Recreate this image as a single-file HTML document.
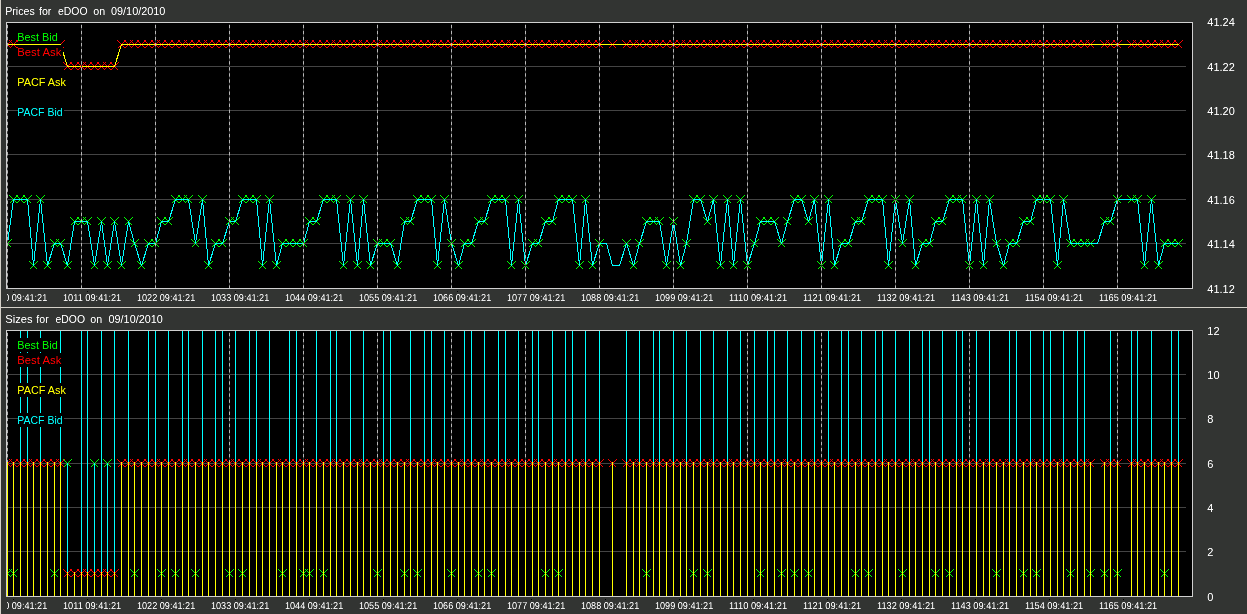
<!DOCTYPE html>
<html><head><meta charset="utf-8"><title>eDOO 09/10/2010</title>
<style>html,body{margin:0;padding:0;background:#323432;overflow:hidden}svg{display:block}text{font-family:"Liberation Sans",Arial,sans-serif;font-size:11px;fill:#fff}.s{font-size:10px;text-rendering:geometricPrecision}.c{shape-rendering:crispEdges;fill:none;stroke-width:1;stroke-linecap:square}</style></head><body>
<svg width="1247" height="614" viewBox="0 0 1247 614">
<defs><filter id="t" x="0" y="0" width="100%" height="100%" filterUnits="userSpaceOnUse" color-interpolation-filters="sRGB"><feComponentTransfer><feFuncA type="table" tableValues="0 0.15 0.5 0.85 1"/></feComponentTransfer></filter></defs>
<rect width="1247" height="614" fill="#323432"/>
<rect x="0" y="0" width="1" height="614" fill="#d4d0c8"/>
<rect x="0" y="307" width="1247" height="1" fill="#d4d0c8"/>
<g>
<rect x="6.5" y="22.5" width="1186" height="266" fill="#000" stroke="#d0d0d0" stroke-width="1" shape-rendering="crispEdges"/>
<path d="M7 66.5H1186M7 110.5H1186M7 154.5H1186M7 199.5H1186M7 243.5H1186" stroke="#444444" stroke-width="1" fill="none" shape-rendering="crispEdges"/>
<clipPath id="ptop"><rect x="7" y="23" width="1185" height="265"/></clipPath>
<g clip-path="url(#ptop)">
<path class="c" d="M3.5 239.5l7 7M4.5 246.5l7 -7M9.5 195.5l7 7M10.5 202.5l7 -7M16.5 195.5l7 7M17.5 202.5l7 -7M23.5 195.5l7 7M24.5 202.5l7 -7M29.5 261.5l7 7M30.5 268.5l7 -7M36.5 195.5l7 7M37.5 202.5l7 -7M43.5 261.5l7 7M44.5 268.5l7 -7M50.5 239.5l7 7M51.5 246.5l7 -7M56.5 239.5l7 7M57.5 246.5l7 -7M63.5 261.5l7 7M64.5 268.5l7 -7M70.5 217.5l7 7M71.5 224.5l7 -7M77.5 217.5l7 7M78.5 224.5l7 -7M83.5 217.5l7 7M84.5 224.5l7 -7M90.5 261.5l7 7M91.5 268.5l7 -7M97.5 217.5l7 7M98.5 224.5l7 -7M103.5 261.5l7 7M104.5 268.5l7 -7M110.5 217.5l7 7M111.5 224.5l7 -7M117.5 261.5l7 7M118.5 268.5l7 -7M124.5 217.5l7 7M125.5 224.5l7 -7M130.5 239.5l7 7M131.5 246.5l7 -7M137.5 261.5l7 7M138.5 268.5l7 -7M144.5 239.5l7 7M145.5 246.5l7 -7M151.5 239.5l7 7M152.5 246.5l7 -7M157.5 217.5l7 7M158.5 224.5l7 -7M164.5 217.5l7 7M165.5 224.5l7 -7M171.5 195.5l7 7M172.5 202.5l7 -7M178.5 195.5l7 7M179.5 202.5l7 -7M184.5 195.5l7 7M185.5 202.5l7 -7M191.5 239.5l7 7M192.5 246.5l7 -7M198.5 195.5l7 7M199.5 202.5l7 -7M204.5 261.5l7 7M205.5 268.5l7 -7M211.5 239.5l7 7M212.5 246.5l7 -7M218.5 239.5l7 7M219.5 246.5l7 -7M225.5 217.5l7 7M226.5 224.5l7 -7M231.5 217.5l7 7M232.5 224.5l7 -7M238.5 195.5l7 7M239.5 202.5l7 -7M245.5 195.5l7 7M246.5 202.5l7 -7M252.5 195.5l7 7M253.5 202.5l7 -7M258.5 261.5l7 7M259.5 268.5l7 -7M265.5 195.5l7 7M266.5 202.5l7 -7M272.5 261.5l7 7M273.5 268.5l7 -7M278.5 239.5l7 7M279.5 246.5l7 -7M285.5 239.5l7 7M286.5 246.5l7 -7M292.5 239.5l7 7M293.5 246.5l7 -7M299.5 239.5l7 7M300.5 246.5l7 -7M305.5 217.5l7 7M306.5 224.5l7 -7M312.5 217.5l7 7M313.5 224.5l7 -7M319.5 195.5l7 7M320.5 202.5l7 -7M326.5 195.5l7 7M327.5 202.5l7 -7M332.5 195.5l7 7M333.5 202.5l7 -7M339.5 261.5l7 7M340.5 268.5l7 -7M346.5 195.5l7 7M347.5 202.5l7 -7M353.5 261.5l7 7M354.5 268.5l7 -7M359.5 195.5l7 7M360.5 202.5l7 -7M366.5 261.5l7 7M367.5 268.5l7 -7M373.5 239.5l7 7M374.5 246.5l7 -7M379.5 239.5l7 7M380.5 246.5l7 -7M386.5 239.5l7 7M387.5 246.5l7 -7M393.5 261.5l7 7M394.5 268.5l7 -7M400.5 217.5l7 7M401.5 224.5l7 -7M406.5 217.5l7 7M407.5 224.5l7 -7M413.5 195.5l7 7M414.5 202.5l7 -7M420.5 195.5l7 7M421.5 202.5l7 -7M427.5 195.5l7 7M428.5 202.5l7 -7M433.5 261.5l7 7M434.5 268.5l7 -7M440.5 195.5l7 7M441.5 202.5l7 -7M447.5 239.5l7 7M448.5 246.5l7 -7M454.5 261.5l7 7M455.5 268.5l7 -7M460.5 239.5l7 7M461.5 246.5l7 -7M467.5 239.5l7 7M468.5 246.5l7 -7M474.5 217.5l7 7M475.5 224.5l7 -7M480.5 217.5l7 7M481.5 224.5l7 -7M487.5 195.5l7 7M488.5 202.5l7 -7M494.5 195.5l7 7M495.5 202.5l7 -7M501.5 195.5l7 7M502.5 202.5l7 -7M507.5 261.5l7 7M508.5 268.5l7 -7M514.5 195.5l7 7M515.5 202.5l7 -7M521.5 261.5l7 7M522.5 268.5l7 -7M528.5 239.5l7 7M529.5 246.5l7 -7M534.5 239.5l7 7M535.5 246.5l7 -7M541.5 217.5l7 7M542.5 224.5l7 -7M548.5 217.5l7 7M549.5 224.5l7 -7M554.5 195.5l7 7M555.5 202.5l7 -7M561.5 195.5l7 7M562.5 202.5l7 -7M568.5 195.5l7 7M569.5 202.5l7 -7M575.5 261.5l7 7M576.5 268.5l7 -7M581.5 195.5l7 7M582.5 202.5l7 -7M588.5 261.5l7 7M589.5 268.5l7 -7M595.5 239.5l7 7M596.5 246.5l7 -7M622.5 239.5l7 7M623.5 246.5l7 -7M629.5 261.5l7 7M630.5 268.5l7 -7M635.5 239.5l7 7M636.5 246.5l7 -7M642.5 217.5l7 7M643.5 224.5l7 -7M649.5 217.5l7 7M650.5 224.5l7 -7M655.5 217.5l7 7M656.5 224.5l7 -7M662.5 261.5l7 7M663.5 268.5l7 -7M669.5 217.5l7 7M670.5 224.5l7 -7M676.5 261.5l7 7M677.5 268.5l7 -7M682.5 239.5l7 7M683.5 246.5l7 -7M689.5 195.5l7 7M690.5 202.5l7 -7M696.5 195.5l7 7M697.5 202.5l7 -7M703.5 217.5l7 7M704.5 224.5l7 -7M709.5 195.5l7 7M710.5 202.5l7 -7M716.5 261.5l7 7M717.5 268.5l7 -7M723.5 195.5l7 7M724.5 202.5l7 -7M729.5 261.5l7 7M730.5 268.5l7 -7M736.5 195.5l7 7M737.5 202.5l7 -7M743.5 261.5l7 7M744.5 268.5l7 -7M750.5 239.5l7 7M751.5 246.5l7 -7M756.5 217.5l7 7M757.5 224.5l7 -7M763.5 217.5l7 7M764.5 224.5l7 -7M770.5 217.5l7 7M771.5 224.5l7 -7M777.5 239.5l7 7M778.5 246.5l7 -7M783.5 217.5l7 7M784.5 224.5l7 -7M790.5 195.5l7 7M791.5 202.5l7 -7M797.5 195.5l7 7M798.5 202.5l7 -7M804.5 217.5l7 7M805.5 224.5l7 -7M810.5 195.5l7 7M811.5 202.5l7 -7M817.5 261.5l7 7M818.5 268.5l7 -7M824.5 195.5l7 7M825.5 202.5l7 -7M830.5 261.5l7 7M831.5 268.5l7 -7M837.5 239.5l7 7M838.5 246.5l7 -7M844.5 239.5l7 7M845.5 246.5l7 -7M851.5 217.5l7 7M852.5 224.5l7 -7M857.5 217.5l7 7M858.5 224.5l7 -7M864.5 195.5l7 7M865.5 202.5l7 -7M871.5 195.5l7 7M872.5 202.5l7 -7M878.5 195.5l7 7M879.5 202.5l7 -7M884.5 261.5l7 7M885.5 268.5l7 -7M891.5 195.5l7 7M892.5 202.5l7 -7M898.5 239.5l7 7M899.5 246.5l7 -7M905.5 195.5l7 7M906.5 202.5l7 -7M911.5 261.5l7 7M912.5 268.5l7 -7M918.5 239.5l7 7M919.5 246.5l7 -7M925.5 239.5l7 7M926.5 246.5l7 -7M931.5 217.5l7 7M932.5 224.5l7 -7M938.5 217.5l7 7M939.5 224.5l7 -7M945.5 195.5l7 7M946.5 202.5l7 -7M952.5 195.5l7 7M953.5 202.5l7 -7M958.5 195.5l7 7M959.5 202.5l7 -7M965.5 261.5l7 7M966.5 268.5l7 -7M972.5 195.5l7 7M973.5 202.5l7 -7M979.5 261.5l7 7M980.5 268.5l7 -7M985.5 195.5l7 7M986.5 202.5l7 -7M992.5 239.5l7 7M993.5 246.5l7 -7M999.5 261.5l7 7M1000.5 268.5l7 -7M1005.5 239.5l7 7M1006.5 246.5l7 -7M1012.5 239.5l7 7M1013.5 246.5l7 -7M1019.5 217.5l7 7M1020.5 224.5l7 -7M1026.5 217.5l7 7M1027.5 224.5l7 -7M1032.5 195.5l7 7M1033.5 202.5l7 -7M1039.5 195.5l7 7M1040.5 202.5l7 -7M1046.5 195.5l7 7M1047.5 202.5l7 -7M1053.5 261.5l7 7M1054.5 268.5l7 -7M1059.5 195.5l7 7M1060.5 202.5l7 -7M1066.5 239.5l7 7M1067.5 246.5l7 -7M1073.5 239.5l7 7M1074.5 246.5l7 -7M1080.5 239.5l7 7M1081.5 246.5l7 -7M1086.5 239.5l7 7M1087.5 246.5l7 -7M1100.5 217.5l7 7M1101.5 224.5l7 -7M1106.5 217.5l7 7M1107.5 224.5l7 -7M1113.5 195.5l7 7M1114.5 202.5l7 -7M1127.5 195.5l7 7M1128.5 202.5l7 -7M1133.5 195.5l7 7M1134.5 202.5l7 -7M1140.5 261.5l7 7M1141.5 268.5l7 -7M1147.5 195.5l7 7M1148.5 202.5l7 -7M1154.5 261.5l7 7M1155.5 268.5l7 -7M1160.5 239.5l7 7M1161.5 246.5l7 -7M1167.5 239.5l7 7M1168.5 246.5l7 -7M1174.5 239.5l7 7M1175.5 246.5l7 -7" stroke="#0f0"/>
<path class="c" d="M3.5 40.5l7 7M4.5 47.5l7 -7M9.5 40.5l7 7M10.5 47.5l7 -7M16.5 40.5l7 7M17.5 47.5l7 -7M23.5 40.5l7 7M24.5 47.5l7 -7M29.5 40.5l7 7M30.5 47.5l7 -7M36.5 40.5l7 7M37.5 47.5l7 -7M43.5 40.5l7 7M44.5 47.5l7 -7M50.5 40.5l7 7M51.5 47.5l7 -7M56.5 40.5l7 7M57.5 47.5l7 -7M63.5 62.5l7 7M64.5 69.5l7 -7M70.5 62.5l7 7M71.5 69.5l7 -7M77.5 62.5l7 7M78.5 69.5l7 -7M83.5 62.5l7 7M84.5 69.5l7 -7M90.5 62.5l7 7M91.5 69.5l7 -7M97.5 62.5l7 7M98.5 69.5l7 -7M103.5 62.5l7 7M104.5 69.5l7 -7M110.5 62.5l7 7M111.5 69.5l7 -7M117.5 40.5l7 7M118.5 47.5l7 -7M124.5 40.5l7 7M125.5 47.5l7 -7M130.5 40.5l7 7M131.5 47.5l7 -7M137.5 40.5l7 7M138.5 47.5l7 -7M144.5 40.5l7 7M145.5 47.5l7 -7M151.5 40.5l7 7M152.5 47.5l7 -7M157.5 40.5l7 7M158.5 47.5l7 -7M164.5 40.5l7 7M165.5 47.5l7 -7M171.5 40.5l7 7M172.5 47.5l7 -7M178.5 40.5l7 7M179.5 47.5l7 -7M184.5 40.5l7 7M185.5 47.5l7 -7M191.5 40.5l7 7M192.5 47.5l7 -7M198.5 40.5l7 7M199.5 47.5l7 -7M204.5 40.5l7 7M205.5 47.5l7 -7M211.5 40.5l7 7M212.5 47.5l7 -7M218.5 40.5l7 7M219.5 47.5l7 -7M225.5 40.5l7 7M226.5 47.5l7 -7M231.5 40.5l7 7M232.5 47.5l7 -7M238.5 40.5l7 7M239.5 47.5l7 -7M245.5 40.5l7 7M246.5 47.5l7 -7M252.5 40.5l7 7M253.5 47.5l7 -7M258.5 40.5l7 7M259.5 47.5l7 -7M265.5 40.5l7 7M266.5 47.5l7 -7M272.5 40.5l7 7M273.5 47.5l7 -7M278.5 40.5l7 7M279.5 47.5l7 -7M285.5 40.5l7 7M286.5 47.5l7 -7M292.5 40.5l7 7M293.5 47.5l7 -7M299.5 40.5l7 7M300.5 47.5l7 -7M305.5 40.5l7 7M306.5 47.5l7 -7M312.5 40.5l7 7M313.5 47.5l7 -7M319.5 40.5l7 7M320.5 47.5l7 -7M326.5 40.5l7 7M327.5 47.5l7 -7M332.5 40.5l7 7M333.5 47.5l7 -7M339.5 40.5l7 7M340.5 47.5l7 -7M346.5 40.5l7 7M347.5 47.5l7 -7M353.5 40.5l7 7M354.5 47.5l7 -7M359.5 40.5l7 7M360.5 47.5l7 -7M366.5 40.5l7 7M367.5 47.5l7 -7M373.5 40.5l7 7M374.5 47.5l7 -7M379.5 40.5l7 7M380.5 47.5l7 -7M386.5 40.5l7 7M387.5 47.5l7 -7M393.5 40.5l7 7M394.5 47.5l7 -7M400.5 40.5l7 7M401.5 47.5l7 -7M406.5 40.5l7 7M407.5 47.5l7 -7M413.5 40.5l7 7M414.5 47.5l7 -7M420.5 40.5l7 7M421.5 47.5l7 -7M427.5 40.5l7 7M428.5 47.5l7 -7M433.5 40.5l7 7M434.5 47.5l7 -7M440.5 40.5l7 7M441.5 47.5l7 -7M447.5 40.5l7 7M448.5 47.5l7 -7M454.5 40.5l7 7M455.5 47.5l7 -7M460.5 40.5l7 7M461.5 47.5l7 -7M467.5 40.5l7 7M468.5 47.5l7 -7M474.5 40.5l7 7M475.5 47.5l7 -7M480.5 40.5l7 7M481.5 47.5l7 -7M487.5 40.5l7 7M488.5 47.5l7 -7M494.5 40.5l7 7M495.5 47.5l7 -7M501.5 40.5l7 7M502.5 47.5l7 -7M507.5 40.5l7 7M508.5 47.5l7 -7M514.5 40.5l7 7M515.5 47.5l7 -7M521.5 40.5l7 7M522.5 47.5l7 -7M528.5 40.5l7 7M529.5 47.5l7 -7M534.5 40.5l7 7M535.5 47.5l7 -7M541.5 40.5l7 7M542.5 47.5l7 -7M548.5 40.5l7 7M549.5 47.5l7 -7M554.5 40.5l7 7M555.5 47.5l7 -7M561.5 40.5l7 7M562.5 47.5l7 -7M568.5 40.5l7 7M569.5 47.5l7 -7M575.5 40.5l7 7M576.5 47.5l7 -7M581.5 40.5l7 7M582.5 47.5l7 -7M588.5 40.5l7 7M589.5 47.5l7 -7M595.5 40.5l7 7M596.5 47.5l7 -7M608.5 40.5l7 7M609.5 47.5l7 -7M622.5 40.5l7 7M623.5 47.5l7 -7M629.5 40.5l7 7M630.5 47.5l7 -7M635.5 40.5l7 7M636.5 47.5l7 -7M642.5 40.5l7 7M643.5 47.5l7 -7M649.5 40.5l7 7M650.5 47.5l7 -7M655.5 40.5l7 7M656.5 47.5l7 -7M662.5 40.5l7 7M663.5 47.5l7 -7M669.5 40.5l7 7M670.5 47.5l7 -7M676.5 40.5l7 7M677.5 47.5l7 -7M682.5 40.5l7 7M683.5 47.5l7 -7M689.5 40.5l7 7M690.5 47.5l7 -7M696.5 40.5l7 7M697.5 47.5l7 -7M703.5 40.5l7 7M704.5 47.5l7 -7M709.5 40.5l7 7M710.5 47.5l7 -7M716.5 40.5l7 7M717.5 47.5l7 -7M723.5 40.5l7 7M724.5 47.5l7 -7M729.5 40.5l7 7M730.5 47.5l7 -7M736.5 40.5l7 7M737.5 47.5l7 -7M743.5 40.5l7 7M744.5 47.5l7 -7M750.5 40.5l7 7M751.5 47.5l7 -7M756.5 40.5l7 7M757.5 47.5l7 -7M763.5 40.5l7 7M764.5 47.5l7 -7M770.5 40.5l7 7M771.5 47.5l7 -7M777.5 40.5l7 7M778.5 47.5l7 -7M783.5 40.5l7 7M784.5 47.5l7 -7M790.5 40.5l7 7M791.5 47.5l7 -7M797.5 40.5l7 7M798.5 47.5l7 -7M804.5 40.5l7 7M805.5 47.5l7 -7M810.5 40.5l7 7M811.5 47.5l7 -7M817.5 40.5l7 7M818.5 47.5l7 -7M824.5 40.5l7 7M825.5 47.5l7 -7M830.5 40.5l7 7M831.5 47.5l7 -7M837.5 40.5l7 7M838.5 47.5l7 -7M844.5 40.5l7 7M845.5 47.5l7 -7M851.5 40.5l7 7M852.5 47.5l7 -7M857.5 40.5l7 7M858.5 47.5l7 -7M864.5 40.5l7 7M865.5 47.5l7 -7M871.5 40.5l7 7M872.5 47.5l7 -7M878.5 40.5l7 7M879.5 47.5l7 -7M884.5 40.5l7 7M885.5 47.5l7 -7M891.5 40.5l7 7M892.5 47.5l7 -7M898.5 40.5l7 7M899.5 47.5l7 -7M905.5 40.5l7 7M906.5 47.5l7 -7M911.5 40.5l7 7M912.5 47.5l7 -7M918.5 40.5l7 7M919.5 47.5l7 -7M925.5 40.5l7 7M926.5 47.5l7 -7M931.5 40.5l7 7M932.5 47.5l7 -7M938.5 40.5l7 7M939.5 47.5l7 -7M945.5 40.5l7 7M946.5 47.5l7 -7M952.5 40.5l7 7M953.5 47.5l7 -7M958.5 40.5l7 7M959.5 47.5l7 -7M965.5 40.5l7 7M966.5 47.5l7 -7M972.5 40.5l7 7M973.5 47.5l7 -7M979.5 40.5l7 7M980.5 47.5l7 -7M985.5 40.5l7 7M986.5 47.5l7 -7M992.5 40.5l7 7M993.5 47.5l7 -7M999.5 40.5l7 7M1000.5 47.5l7 -7M1005.5 40.5l7 7M1006.5 47.5l7 -7M1012.5 40.5l7 7M1013.5 47.5l7 -7M1019.5 40.5l7 7M1020.5 47.5l7 -7M1026.5 40.5l7 7M1027.5 47.5l7 -7M1032.5 40.5l7 7M1033.5 47.5l7 -7M1039.5 40.5l7 7M1040.5 47.5l7 -7M1046.5 40.5l7 7M1047.5 47.5l7 -7M1053.5 40.5l7 7M1054.5 47.5l7 -7M1059.5 40.5l7 7M1060.5 47.5l7 -7M1066.5 40.5l7 7M1067.5 47.5l7 -7M1073.5 40.5l7 7M1074.5 47.5l7 -7M1080.5 40.5l7 7M1081.5 47.5l7 -7M1086.5 40.5l7 7M1087.5 47.5l7 -7M1100.5 40.5l7 7M1101.5 47.5l7 -7M1106.5 40.5l7 7M1107.5 47.5l7 -7M1113.5 40.5l7 7M1114.5 47.5l7 -7M1127.5 40.5l7 7M1128.5 47.5l7 -7M1133.5 40.5l7 7M1134.5 47.5l7 -7M1140.5 40.5l7 7M1141.5 47.5l7 -7M1147.5 40.5l7 7M1148.5 47.5l7 -7M1154.5 40.5l7 7M1155.5 47.5l7 -7M1160.5 40.5l7 7M1161.5 47.5l7 -7M1167.5 40.5l7 7M1168.5 47.5l7 -7M1174.5 40.5l7 7M1175.5 47.5l7 -7" stroke="#f00"/>
<polyline class="c" points="7.5,44.5 13.5,44.5 20.5,44.5 27.5,44.5 33.5,44.5 40.5,44.5 47.5,44.5 54.5,44.5 60.5,44.5 67.5,66.5 74.5,66.5 81.5,66.5 87.5,66.5 94.5,66.5 101.5,66.5 107.5,66.5 114.5,66.5 121.5,44.5 128.5,44.5 134.5,44.5 141.5,44.5 148.5,44.5 155.5,44.5 161.5,44.5 168.5,44.5 175.5,44.5 182.5,44.5 188.5,44.5 195.5,44.5 202.5,44.5 208.5,44.5 215.5,44.5 222.5,44.5 229.5,44.5 235.5,44.5 242.5,44.5 249.5,44.5 256.5,44.5 262.5,44.5 269.5,44.5 276.5,44.5 282.5,44.5 289.5,44.5 296.5,44.5 303.5,44.5 309.5,44.5 316.5,44.5 323.5,44.5 330.5,44.5 336.5,44.5 343.5,44.5 350.5,44.5 357.5,44.5 363.5,44.5 370.5,44.5 377.5,44.5 383.5,44.5 390.5,44.5 397.5,44.5 404.5,44.5 410.5,44.5 417.5,44.5 424.5,44.5 431.5,44.5 437.5,44.5 444.5,44.5 451.5,44.5 458.5,44.5 464.5,44.5 471.5,44.5 478.5,44.5 484.5,44.5 491.5,44.5 498.5,44.5 505.5,44.5 511.5,44.5 518.5,44.5 525.5,44.5 532.5,44.5 538.5,44.5 545.5,44.5 552.5,44.5 558.5,44.5 565.5,44.5 572.5,44.5 579.5,44.5 585.5,44.5 592.5,44.5 599.5,44.5 606.5,44.5 612.5,44.5 619.5,44.5 626.5,44.5 633.5,44.5 639.5,44.5 646.5,44.5 653.5,44.5 659.5,44.5 666.5,44.5 673.5,44.5 680.5,44.5 686.5,44.5 693.5,44.5 700.5,44.5 707.5,44.5 713.5,44.5 720.5,44.5 727.5,44.5 733.5,44.5 740.5,44.5 747.5,44.5 754.5,44.5 760.5,44.5 767.5,44.5 774.5,44.5 781.5,44.5 787.5,44.5 794.5,44.5 801.5,44.5 808.5,44.5 814.5,44.5 821.5,44.5 828.5,44.5 834.5,44.5 841.5,44.5 848.5,44.5 855.5,44.5 861.5,44.5 868.5,44.5 875.5,44.5 882.5,44.5 888.5,44.5 895.5,44.5 902.5,44.5 909.5,44.5 915.5,44.5 922.5,44.5 929.5,44.5 935.5,44.5 942.5,44.5 949.5,44.5 956.5,44.5 962.5,44.5 969.5,44.5 976.5,44.5 983.5,44.5 989.5,44.5 996.5,44.5 1003.5,44.5 1009.5,44.5 1016.5,44.5 1023.5,44.5 1030.5,44.5 1036.5,44.5 1043.5,44.5 1050.5,44.5 1057.5,44.5 1063.5,44.5 1070.5,44.5 1077.5,44.5 1084.5,44.5 1090.5,44.5 1097.5,44.5 1104.5,44.5 1110.5,44.5 1117.5,44.5 1124.5,44.5 1131.5,44.5 1137.5,44.5 1144.5,44.5 1151.5,44.5 1158.5,44.5 1164.5,44.5 1171.5,44.5 1178.5,44.5" stroke="#ff0"/>
<polyline class="c" points="7.5,243.5 13.5,199.5 20.5,199.5 27.5,199.5 33.5,265.5 40.5,199.5 47.5,265.5 54.5,243.5 60.5,243.5 67.5,265.5 74.5,221.5 81.5,221.5 87.5,221.5 94.5,265.5 101.5,221.5 107.5,265.5 114.5,221.5 121.5,265.5 128.5,221.5 134.5,243.5 141.5,265.5 148.5,243.5 155.5,243.5 161.5,221.5 168.5,221.5 175.5,199.5 182.5,199.5 188.5,199.5 195.5,243.5 202.5,199.5 208.5,265.5 215.5,243.5 222.5,243.5 229.5,221.5 235.5,221.5 242.5,199.5 249.5,199.5 256.5,199.5 262.5,265.5 269.5,199.5 276.5,265.5 282.5,243.5 289.5,243.5 296.5,243.5 303.5,243.5 309.5,221.5 316.5,221.5 323.5,199.5 330.5,199.5 336.5,199.5 343.5,265.5 350.5,199.5 357.5,265.5 363.5,199.5 370.5,265.5 377.5,243.5 383.5,243.5 390.5,243.5 397.5,265.5 404.5,221.5 410.5,221.5 417.5,199.5 424.5,199.5 431.5,199.5 437.5,265.5 444.5,199.5 451.5,243.5 458.5,265.5 464.5,243.5 471.5,243.5 478.5,221.5 484.5,221.5 491.5,199.5 498.5,199.5 505.5,199.5 511.5,265.5 518.5,199.5 525.5,265.5 532.5,243.5 538.5,243.5 545.5,221.5 552.5,221.5 558.5,199.5 565.5,199.5 572.5,199.5 579.5,265.5 585.5,199.5 592.5,265.5 599.5,243.5 606.5,243.5 612.5,265.5 619.5,265.5 626.5,243.5 633.5,265.5 639.5,243.5 646.5,221.5 653.5,221.5 659.5,221.5 666.5,265.5 673.5,221.5 680.5,265.5 686.5,243.5 693.5,199.5 700.5,199.5 707.5,221.5 713.5,199.5 720.5,265.5 727.5,199.5 733.5,265.5 740.5,199.5 747.5,265.5 754.5,243.5 760.5,221.5 767.5,221.5 774.5,221.5 781.5,243.5 787.5,221.5 794.5,199.5 801.5,199.5 808.5,221.5 814.5,199.5 821.5,265.5 828.5,199.5 834.5,265.5 841.5,243.5 848.5,243.5 855.5,221.5 861.5,221.5 868.5,199.5 875.5,199.5 882.5,199.5 888.5,265.5 895.5,199.5 902.5,243.5 909.5,199.5 915.5,265.5 922.5,243.5 929.5,243.5 935.5,221.5 942.5,221.5 949.5,199.5 956.5,199.5 962.5,199.5 969.5,265.5 976.5,199.5 983.5,265.5 989.5,199.5 996.5,243.5 1003.5,265.5 1009.5,243.5 1016.5,243.5 1023.5,221.5 1030.5,221.5 1036.5,199.5 1043.5,199.5 1050.5,199.5 1057.5,265.5 1063.5,199.5 1070.5,243.5 1077.5,243.5 1084.5,243.5 1090.5,243.5 1097.5,243.5 1104.5,221.5 1110.5,221.5 1117.5,199.5 1124.5,199.5 1131.5,199.5 1137.5,199.5 1144.5,265.5 1151.5,199.5 1158.5,265.5 1164.5,243.5 1171.5,243.5 1178.5,243.5" stroke="#0ff" stroke-linejoin="bevel"/>
<path d="M7.5 24.8V288M81.5 24.8V288M155.5 24.8V288M229.5 24.8V288M303.5 24.8V288M377.5 24.8V288M451.5 24.8V288M525.5 24.8V288M599.5 24.8V288M673.5 24.8V288M747.5 24.8V288M821.5 24.8V288M895.5 24.8V288M969.5 24.8V288M1043.5 24.8V288M1117.5 24.8V288" stroke="#2c2c2c" stroke-width="1" fill="none"/><path d="M7.5 24.8V288M81.5 24.8V288M155.5 24.8V288M229.5 24.8V288M303.5 24.8V288M377.5 24.8V288M451.5 24.8V288M525.5 24.8V288M599.5 24.8V288M673.5 24.8V288M747.5 24.8V288M821.5 24.8V288M895.5 24.8V288M969.5 24.8V288M1043.5 24.8V288M1117.5 24.8V288" stroke="#b8b8b8" stroke-width="1" stroke-dasharray="3.4 2.66" fill="none"/>
</g>
<rect x="18" y="30" width="42" height="14" fill="#000"/>
<rect x="18" y="45" width="45" height="14" fill="#000"/>
<rect x="18" y="75" width="51" height="14" fill="#000"/>
<rect x="18" y="105" width="46" height="14" fill="#000"/>
</g>
<clipPath id="ktop"><rect x="7" y="290" width="1240" height="20"/></clipPath>
<path d="M13 291h1v1h-1zM87 291h1v1h-1zM161 291h1v1h-1zM235 291h1v1h-1zM309 291h1v1h-1zM383 291h1v1h-1zM457 291h1v1h-1zM531 291h1v1h-1zM605 291h1v1h-1zM679 291h1v1h-1zM753 291h1v1h-1zM827 291h1v1h-1zM901 291h1v1h-1zM975 291h1v1h-1zM1049 291h1v1h-1zM1123 291h1v1h-1z" fill="#000"/>
<g>
<rect x="6.5" y="330.5" width="1186" height="266" fill="#000" stroke="#d0d0d0" stroke-width="1" shape-rendering="crispEdges"/>
<path d="M7 374.5H1186M7 418.5H1186M7 463.5H1186M7 507.5H1186M7 551.5H1186" stroke="#444444" stroke-width="1" fill="none" shape-rendering="crispEdges"/>
<path d="M7.5 332.8V596M81.5 332.8V596M155.5 332.8V596M229.5 332.8V596M303.5 332.8V596M377.5 332.8V596M451.5 332.8V596M525.5 332.8V596M599.5 332.8V596M673.5 332.8V596M747.5 332.8V596M821.5 332.8V596M895.5 332.8V596M969.5 332.8V596M1043.5 332.8V596M1117.5 332.8V596" stroke="#2c2c2c" stroke-width="1" fill="none"/><path d="M7.5 332.8V596M81.5 332.8V596M155.5 332.8V596M229.5 332.8V596M303.5 332.8V596M377.5 332.8V596M451.5 332.8V596M525.5 332.8V596M599.5 332.8V596M673.5 332.8V596M747.5 332.8V596M821.5 332.8V596M895.5 332.8V596M969.5 332.8V596M1043.5 332.8V596M1117.5 332.8V596" stroke="#b8b8b8" stroke-width="1" stroke-dasharray="3.4 2.66" fill="none"/>
<clipPath id="pbot"><rect x="7" y="331" width="1185" height="265"/></clipPath>
<g clip-path="url(#pbot)">
<path class="c" d="M3.5 569.5l7 7M4.5 576.5l7 -7M9.5 569.5l7 7M10.5 576.5l7 -7M50.5 569.5l7 7M51.5 576.5l7 -7M130.5 569.5l7 7M131.5 576.5l7 -7M157.5 569.5l7 7M158.5 576.5l7 -7M171.5 569.5l7 7M172.5 576.5l7 -7M191.5 569.5l7 7M192.5 576.5l7 -7M225.5 569.5l7 7M226.5 576.5l7 -7M238.5 569.5l7 7M239.5 576.5l7 -7M278.5 569.5l7 7M279.5 576.5l7 -7M299.5 569.5l7 7M300.5 576.5l7 -7M305.5 569.5l7 7M306.5 576.5l7 -7M319.5 569.5l7 7M320.5 576.5l7 -7M373.5 569.5l7 7M374.5 576.5l7 -7M400.5 569.5l7 7M401.5 576.5l7 -7M413.5 569.5l7 7M414.5 576.5l7 -7M447.5 569.5l7 7M448.5 576.5l7 -7M474.5 569.5l7 7M475.5 576.5l7 -7M487.5 569.5l7 7M488.5 576.5l7 -7M541.5 569.5l7 7M542.5 576.5l7 -7M554.5 569.5l7 7M555.5 576.5l7 -7M642.5 569.5l7 7M643.5 576.5l7 -7M689.5 569.5l7 7M690.5 576.5l7 -7M703.5 569.5l7 7M704.5 576.5l7 -7M756.5 569.5l7 7M757.5 576.5l7 -7M777.5 569.5l7 7M778.5 576.5l7 -7M790.5 569.5l7 7M791.5 576.5l7 -7M804.5 569.5l7 7M805.5 576.5l7 -7M851.5 569.5l7 7M852.5 576.5l7 -7M864.5 569.5l7 7M865.5 576.5l7 -7M898.5 569.5l7 7M899.5 576.5l7 -7M931.5 569.5l7 7M932.5 576.5l7 -7M945.5 569.5l7 7M946.5 576.5l7 -7M992.5 569.5l7 7M993.5 576.5l7 -7M1019.5 569.5l7 7M1020.5 576.5l7 -7M1032.5 569.5l7 7M1033.5 576.5l7 -7M1066.5 569.5l7 7M1067.5 576.5l7 -7M1086.5 569.5l7 7M1087.5 576.5l7 -7M1100.5 569.5l7 7M1101.5 576.5l7 -7M1113.5 569.5l7 7M1114.5 576.5l7 -7M1160.5 569.5l7 7M1161.5 576.5l7 -7M63.5 459.5l7 7M64.5 466.5l7 -7M90.5 459.5l7 7M91.5 466.5l7 -7M103.5 459.5l7 7M104.5 466.5l7 -7" stroke="#0f0"/>
<path class="c" d="M3.5 459.5l7 7M4.5 466.5l7 -7M9.5 459.5l7 7M10.5 466.5l7 -7M16.5 459.5l7 7M17.5 466.5l7 -7M23.5 459.5l7 7M24.5 466.5l7 -7M29.5 459.5l7 7M30.5 466.5l7 -7M36.5 459.5l7 7M37.5 466.5l7 -7M43.5 459.5l7 7M44.5 466.5l7 -7M50.5 459.5l7 7M51.5 466.5l7 -7M56.5 459.5l7 7M57.5 466.5l7 -7M63.5 569.5l7 7M64.5 576.5l7 -7M70.5 569.5l7 7M71.5 576.5l7 -7M77.5 569.5l7 7M78.5 576.5l7 -7M83.5 569.5l7 7M84.5 576.5l7 -7M90.5 569.5l7 7M91.5 576.5l7 -7M97.5 569.5l7 7M98.5 576.5l7 -7M103.5 569.5l7 7M104.5 576.5l7 -7M110.5 569.5l7 7M111.5 576.5l7 -7M117.5 459.5l7 7M118.5 466.5l7 -7M124.5 459.5l7 7M125.5 466.5l7 -7M130.5 459.5l7 7M131.5 466.5l7 -7M137.5 459.5l7 7M138.5 466.5l7 -7M144.5 459.5l7 7M145.5 466.5l7 -7M151.5 459.5l7 7M152.5 466.5l7 -7M157.5 459.5l7 7M158.5 466.5l7 -7M164.5 459.5l7 7M165.5 466.5l7 -7M171.5 459.5l7 7M172.5 466.5l7 -7M178.5 459.5l7 7M179.5 466.5l7 -7M184.5 459.5l7 7M185.5 466.5l7 -7M191.5 459.5l7 7M192.5 466.5l7 -7M198.5 459.5l7 7M199.5 466.5l7 -7M204.5 459.5l7 7M205.5 466.5l7 -7M211.5 459.5l7 7M212.5 466.5l7 -7M218.5 459.5l7 7M219.5 466.5l7 -7M225.5 459.5l7 7M226.5 466.5l7 -7M231.5 459.5l7 7M232.5 466.5l7 -7M238.5 459.5l7 7M239.5 466.5l7 -7M245.5 459.5l7 7M246.5 466.5l7 -7M252.5 459.5l7 7M253.5 466.5l7 -7M258.5 459.5l7 7M259.5 466.5l7 -7M265.5 459.5l7 7M266.5 466.5l7 -7M272.5 459.5l7 7M273.5 466.5l7 -7M278.5 459.5l7 7M279.5 466.5l7 -7M285.5 459.5l7 7M286.5 466.5l7 -7M292.5 459.5l7 7M293.5 466.5l7 -7M299.5 459.5l7 7M300.5 466.5l7 -7M305.5 459.5l7 7M306.5 466.5l7 -7M312.5 459.5l7 7M313.5 466.5l7 -7M319.5 459.5l7 7M320.5 466.5l7 -7M326.5 459.5l7 7M327.5 466.5l7 -7M332.5 459.5l7 7M333.5 466.5l7 -7M339.5 459.5l7 7M340.5 466.5l7 -7M346.5 459.5l7 7M347.5 466.5l7 -7M353.5 459.5l7 7M354.5 466.5l7 -7M359.5 459.5l7 7M360.5 466.5l7 -7M366.5 459.5l7 7M367.5 466.5l7 -7M373.5 459.5l7 7M374.5 466.5l7 -7M379.5 459.5l7 7M380.5 466.5l7 -7M386.5 459.5l7 7M387.5 466.5l7 -7M393.5 459.5l7 7M394.5 466.5l7 -7M400.5 459.5l7 7M401.5 466.5l7 -7M406.5 459.5l7 7M407.5 466.5l7 -7M413.5 459.5l7 7M414.5 466.5l7 -7M420.5 459.5l7 7M421.5 466.5l7 -7M427.5 459.5l7 7M428.5 466.5l7 -7M433.5 459.5l7 7M434.5 466.5l7 -7M440.5 459.5l7 7M441.5 466.5l7 -7M447.5 459.5l7 7M448.5 466.5l7 -7M454.5 459.5l7 7M455.5 466.5l7 -7M460.5 459.5l7 7M461.5 466.5l7 -7M467.5 459.5l7 7M468.5 466.5l7 -7M474.5 459.5l7 7M475.5 466.5l7 -7M480.5 459.5l7 7M481.5 466.5l7 -7M487.5 459.5l7 7M488.5 466.5l7 -7M494.5 459.5l7 7M495.5 466.5l7 -7M501.5 459.5l7 7M502.5 466.5l7 -7M507.5 459.5l7 7M508.5 466.5l7 -7M514.5 459.5l7 7M515.5 466.5l7 -7M521.5 459.5l7 7M522.5 466.5l7 -7M528.5 459.5l7 7M529.5 466.5l7 -7M534.5 459.5l7 7M535.5 466.5l7 -7M541.5 459.5l7 7M542.5 466.5l7 -7M548.5 459.5l7 7M549.5 466.5l7 -7M554.5 459.5l7 7M555.5 466.5l7 -7M561.5 459.5l7 7M562.5 466.5l7 -7M568.5 459.5l7 7M569.5 466.5l7 -7M575.5 459.5l7 7M576.5 466.5l7 -7M581.5 459.5l7 7M582.5 466.5l7 -7M588.5 459.5l7 7M589.5 466.5l7 -7M595.5 459.5l7 7M596.5 466.5l7 -7M608.5 459.5l7 7M609.5 466.5l7 -7M622.5 459.5l7 7M623.5 466.5l7 -7M629.5 459.5l7 7M630.5 466.5l7 -7M635.5 459.5l7 7M636.5 466.5l7 -7M642.5 459.5l7 7M643.5 466.5l7 -7M649.5 459.5l7 7M650.5 466.5l7 -7M655.5 459.5l7 7M656.5 466.5l7 -7M662.5 459.5l7 7M663.5 466.5l7 -7M669.5 459.5l7 7M670.5 466.5l7 -7M676.5 459.5l7 7M677.5 466.5l7 -7M682.5 459.5l7 7M683.5 466.5l7 -7M689.5 459.5l7 7M690.5 466.5l7 -7M696.5 459.5l7 7M697.5 466.5l7 -7M703.5 459.5l7 7M704.5 466.5l7 -7M709.5 459.5l7 7M710.5 466.5l7 -7M716.5 459.5l7 7M717.5 466.5l7 -7M723.5 459.5l7 7M724.5 466.5l7 -7M729.5 459.5l7 7M730.5 466.5l7 -7M736.5 459.5l7 7M737.5 466.5l7 -7M743.5 459.5l7 7M744.5 466.5l7 -7M750.5 459.5l7 7M751.5 466.5l7 -7M756.5 459.5l7 7M757.5 466.5l7 -7M763.5 459.5l7 7M764.5 466.5l7 -7M770.5 459.5l7 7M771.5 466.5l7 -7M777.5 459.5l7 7M778.5 466.5l7 -7M783.5 459.5l7 7M784.5 466.5l7 -7M790.5 459.5l7 7M791.5 466.5l7 -7M797.5 459.5l7 7M798.5 466.5l7 -7M804.5 459.5l7 7M805.5 466.5l7 -7M810.5 459.5l7 7M811.5 466.5l7 -7M817.5 459.5l7 7M818.5 466.5l7 -7M824.5 459.5l7 7M825.5 466.5l7 -7M830.5 459.5l7 7M831.5 466.5l7 -7M837.5 459.5l7 7M838.5 466.5l7 -7M844.5 459.5l7 7M845.5 466.5l7 -7M851.5 459.5l7 7M852.5 466.5l7 -7M857.5 459.5l7 7M858.5 466.5l7 -7M864.5 459.5l7 7M865.5 466.5l7 -7M871.5 459.5l7 7M872.5 466.5l7 -7M878.5 459.5l7 7M879.5 466.5l7 -7M884.5 459.5l7 7M885.5 466.5l7 -7M891.5 459.5l7 7M892.5 466.5l7 -7M898.5 459.5l7 7M899.5 466.5l7 -7M905.5 459.5l7 7M906.5 466.5l7 -7M911.5 459.5l7 7M912.5 466.5l7 -7M918.5 459.5l7 7M919.5 466.5l7 -7M925.5 459.5l7 7M926.5 466.5l7 -7M931.5 459.5l7 7M932.5 466.5l7 -7M938.5 459.5l7 7M939.5 466.5l7 -7M945.5 459.5l7 7M946.5 466.5l7 -7M952.5 459.5l7 7M953.5 466.5l7 -7M958.5 459.5l7 7M959.5 466.5l7 -7M965.5 459.5l7 7M966.5 466.5l7 -7M972.5 459.5l7 7M973.5 466.5l7 -7M979.5 459.5l7 7M980.5 466.5l7 -7M985.5 459.5l7 7M986.5 466.5l7 -7M992.5 459.5l7 7M993.5 466.5l7 -7M999.5 459.5l7 7M1000.5 466.5l7 -7M1005.5 459.5l7 7M1006.5 466.5l7 -7M1012.5 459.5l7 7M1013.5 466.5l7 -7M1019.5 459.5l7 7M1020.5 466.5l7 -7M1026.5 459.5l7 7M1027.5 466.5l7 -7M1032.5 459.5l7 7M1033.5 466.5l7 -7M1039.5 459.5l7 7M1040.5 466.5l7 -7M1046.5 459.5l7 7M1047.5 466.5l7 -7M1053.5 459.5l7 7M1054.5 466.5l7 -7M1059.5 459.5l7 7M1060.5 466.5l7 -7M1066.5 459.5l7 7M1067.5 466.5l7 -7M1073.5 459.5l7 7M1074.5 466.5l7 -7M1080.5 459.5l7 7M1081.5 466.5l7 -7M1086.5 459.5l7 7M1087.5 466.5l7 -7M1100.5 459.5l7 7M1101.5 466.5l7 -7M1106.5 459.5l7 7M1107.5 466.5l7 -7M1113.5 459.5l7 7M1114.5 466.5l7 -7M1127.5 459.5l7 7M1128.5 466.5l7 -7M1133.5 459.5l7 7M1134.5 466.5l7 -7M1140.5 459.5l7 7M1141.5 466.5l7 -7M1147.5 459.5l7 7M1148.5 466.5l7 -7M1154.5 459.5l7 7M1155.5 466.5l7 -7M1160.5 459.5l7 7M1161.5 466.5l7 -7M1167.5 459.5l7 7M1168.5 466.5l7 -7M1174.5 459.5l7 7M1175.5 466.5l7 -7" stroke="#f00"/>
<path d="M20.5 331V596M27.5 331V596M40.5 331V596M60.5 331V596M67.5 463V596M81.5 331V596M87.5 331V596M94.5 463V596M101.5 331V596M107.5 463V596M114.5 331V596M128.5 331V596M148.5 331V596M155.5 331V596M168.5 331V596M182.5 331V596M188.5 331V596M202.5 331V596M215.5 331V596M222.5 331V596M235.5 331V596M249.5 331V596M256.5 331V596M269.5 331V596M289.5 331V596M296.5 331V596M316.5 331V596M330.5 331V596M336.5 331V596M350.5 331V596M363.5 331V596M383.5 331V596M390.5 331V596M410.5 331V596M424.5 331V596M431.5 331V596M444.5 331V596M464.5 331V596M471.5 331V596M484.5 331V596M498.5 331V596M505.5 331V596M518.5 331V596M532.5 331V596M538.5 331V596M552.5 331V596M565.5 331V596M572.5 331V596M585.5 331V596M599.5 331V596M626.5 331V596M639.5 331V596M653.5 331V596M659.5 331V596M673.5 331V596M686.5 331V596M700.5 331V596M713.5 331V596M727.5 331V596M740.5 331V596M754.5 331V596M767.5 331V596M774.5 331V596M787.5 331V596M801.5 331V596M814.5 331V596M828.5 331V596M841.5 331V596M848.5 331V596M861.5 331V596M875.5 331V596M882.5 331V596M895.5 331V596M909.5 331V596M922.5 331V596M929.5 331V596M942.5 331V596M956.5 331V596M962.5 331V596M976.5 331V596M989.5 331V596M1009.5 331V596M1016.5 331V596M1030.5 331V596M1043.5 331V596M1050.5 331V596M1063.5 331V596M1077.5 331V596M1084.5 331V596M1110.5 331V596M1131.5 331V596M1137.5 331V596M1151.5 331V596M1171.5 331V596M1178.5 331V596" stroke="#0ff" stroke-width="1" fill="none" shape-rendering="crispEdges"/>
<path d="M7.5 462V596M13.5 462V596M20.5 462V596M27.5 462V596M33.5 462V596M40.5 462V596M47.5 462V596M54.5 462V596M60.5 462V596M67.5 572V596M74.5 572V596M81.5 572V596M87.5 572V596M94.5 572V596M101.5 572V596M107.5 572V596M114.5 572V596M121.5 462V596M128.5 462V596M134.5 462V596M141.5 462V596M148.5 462V596M155.5 462V596M161.5 462V596M168.5 462V596M175.5 462V596M182.5 462V596M188.5 462V596M195.5 462V596M202.5 462V596M208.5 462V596M215.5 462V596M222.5 462V596M229.5 462V596M235.5 462V596M242.5 462V596M249.5 462V596M256.5 462V596M262.5 462V596M269.5 462V596M276.5 462V596M282.5 462V596M289.5 462V596M296.5 462V596M303.5 462V596M309.5 462V596M316.5 462V596M323.5 462V596M330.5 462V596M336.5 462V596M343.5 462V596M350.5 462V596M357.5 462V596M363.5 462V596M370.5 462V596M377.5 462V596M383.5 462V596M390.5 462V596M397.5 462V596M404.5 462V596M410.5 462V596M417.5 462V596M424.5 462V596M431.5 462V596M437.5 462V596M444.5 462V596M451.5 462V596M458.5 462V596M464.5 462V596M471.5 462V596M478.5 462V596M484.5 462V596M491.5 462V596M498.5 462V596M505.5 462V596M511.5 462V596M518.5 462V596M525.5 462V596M532.5 462V596M538.5 462V596M545.5 462V596M552.5 462V596M558.5 462V596M565.5 462V596M572.5 462V596M579.5 462V596M585.5 462V596M592.5 462V596M599.5 462V596M612.5 462V596M626.5 462V596M633.5 462V596M639.5 462V596M646.5 462V596M653.5 462V596M659.5 462V596M666.5 462V596M673.5 462V596M680.5 462V596M686.5 462V596M693.5 462V596M700.5 462V596M707.5 462V596M713.5 462V596M720.5 462V596M727.5 462V596M733.5 462V596M740.5 462V596M747.5 462V596M754.5 462V596M760.5 462V596M767.5 462V596M774.5 462V596M781.5 462V596M787.5 462V596M794.5 462V596M801.5 462V596M808.5 462V596M814.5 462V596M821.5 462V596M828.5 462V596M834.5 462V596M841.5 462V596M848.5 462V596M855.5 462V596M861.5 462V596M868.5 462V596M875.5 462V596M882.5 462V596M888.5 462V596M895.5 462V596M902.5 462V596M909.5 462V596M915.5 462V596M922.5 462V596M929.5 462V596M935.5 462V596M942.5 462V596M949.5 462V596M956.5 462V596M962.5 462V596M969.5 462V596M976.5 462V596M983.5 462V596M989.5 462V596M996.5 462V596M1003.5 462V596M1009.5 462V596M1016.5 462V596M1023.5 462V596M1030.5 462V596M1036.5 462V596M1043.5 462V596M1050.5 462V596M1057.5 462V596M1063.5 462V596M1070.5 462V596M1077.5 462V596M1084.5 462V596M1090.5 462V596M1104.5 462V596M1110.5 462V596M1117.5 462V596M1131.5 462V596M1137.5 462V596M1144.5 462V596M1151.5 462V596M1158.5 462V596M1164.5 462V596M1171.5 462V596M1178.5 462V596" stroke="#ff0" stroke-width="1" fill="none" shape-rendering="crispEdges"/>
</g>
<rect x="18" y="338" width="42" height="14" fill="#000"/>
<rect x="18" y="353" width="45" height="14" fill="#000"/>
<rect x="18" y="383" width="51" height="14" fill="#000"/>
<rect x="18" y="413" width="46" height="14" fill="#000"/>
</g>
<clipPath id="kbot"><rect x="7" y="598" width="1240" height="20"/></clipPath>
<path d="M13 599h1v1h-1zM87 599h1v1h-1zM161 599h1v1h-1zM235 599h1v1h-1zM309 599h1v1h-1zM383 599h1v1h-1zM457 599h1v1h-1zM531 599h1v1h-1zM605 599h1v1h-1zM679 599h1v1h-1zM753 599h1v1h-1zM827 599h1v1h-1zM901 599h1v1h-1zM975 599h1v1h-1zM1049 599h1v1h-1zM1123 599h1v1h-1z" fill="#000"/>
<g filter="url(#t)">
<text x="5.2" y="15" textLength="29.6" lengthAdjust="spacingAndGlyphs">Prices</text>
<text x="39.0" y="15" textLength="12.4" lengthAdjust="spacingAndGlyphs">for</text>
<text x="58.0" y="15" textLength="29.6" lengthAdjust="spacingAndGlyphs">eDOO</text>
<text x="93.3" y="15" textLength="11.9" lengthAdjust="spacingAndGlyphs">on</text>
<text x="111.0" y="15" textLength="54.4" lengthAdjust="spacingAndGlyphs">09/10/2010</text>
<text x="17.2" y="41" style="fill:#0f0" textLength="40.6" lengthAdjust="spacingAndGlyphs">Best Bid</text>
<text x="17.2" y="56" style="fill:#f00" textLength="44.2" lengthAdjust="spacingAndGlyphs">Best Ask</text>
<text x="17.2" y="86" style="fill:#ff0" textLength="48.8" lengthAdjust="spacingAndGlyphs">PACF Ask</text>
<text x="17.2" y="116" style="fill:#0ff" textLength="45.4" lengthAdjust="spacingAndGlyphs">PACF Bid</text>
<text x="1207.3" y="26">41.24</text>
<text x="1207.3" y="71">41.22</text>
<text x="1207.3" y="115">41.20</text>
<text x="1207.3" y="159">41.18</text>
<text x="1207.3" y="204">41.16</text>
<text x="1207.3" y="248">41.14</text>
<text x="1207.3" y="293">41.12</text>
<g clip-path="url(#ktop)">
<text class="s" x="-11" y="301" textLength="58.2" lengthAdjust="spacingAndGlyphs">1000 09:41:21</text>
<text class="s" x="63" y="301" textLength="58.2" lengthAdjust="spacingAndGlyphs">1011 09:41:21</text>
<text class="s" x="137" y="301" textLength="58.2" lengthAdjust="spacingAndGlyphs">1022 09:41:21</text>
<text class="s" x="211" y="301" textLength="58.2" lengthAdjust="spacingAndGlyphs">1033 09:41:21</text>
<text class="s" x="285" y="301" textLength="58.2" lengthAdjust="spacingAndGlyphs">1044 09:41:21</text>
<text class="s" x="359" y="301" textLength="58.2" lengthAdjust="spacingAndGlyphs">1055 09:41:21</text>
<text class="s" x="433" y="301" textLength="58.2" lengthAdjust="spacingAndGlyphs">1066 09:41:21</text>
<text class="s" x="507" y="301" textLength="58.2" lengthAdjust="spacingAndGlyphs">1077 09:41:21</text>
<text class="s" x="581" y="301" textLength="58.2" lengthAdjust="spacingAndGlyphs">1088 09:41:21</text>
<text class="s" x="655" y="301" textLength="58.2" lengthAdjust="spacingAndGlyphs">1099 09:41:21</text>
<text class="s" x="729" y="301" textLength="58.2" lengthAdjust="spacingAndGlyphs">1110 09:41:21</text>
<text class="s" x="803" y="301" textLength="58.2" lengthAdjust="spacingAndGlyphs">1121 09:41:21</text>
<text class="s" x="877" y="301" textLength="58.2" lengthAdjust="spacingAndGlyphs">1132 09:41:21</text>
<text class="s" x="951" y="301" textLength="58.2" lengthAdjust="spacingAndGlyphs">1143 09:41:21</text>
<text class="s" x="1025" y="301" textLength="58.2" lengthAdjust="spacingAndGlyphs">1154 09:41:21</text>
<text class="s" x="1099" y="301" textLength="58.2" lengthAdjust="spacingAndGlyphs">1165 09:41:21</text>
</g>
<text x="5.2" y="323" textLength="27.4" lengthAdjust="spacingAndGlyphs">Sizes</text>
<text x="36.3" y="323" textLength="12.4" lengthAdjust="spacingAndGlyphs">for</text>
<text x="55.5" y="323" textLength="29.6" lengthAdjust="spacingAndGlyphs">eDOO</text>
<text x="90.3" y="323" textLength="11.9" lengthAdjust="spacingAndGlyphs">on</text>
<text x="108.5" y="323" textLength="54.4" lengthAdjust="spacingAndGlyphs">09/10/2010</text>
<text x="17.2" y="349" style="fill:#0f0" textLength="40.6" lengthAdjust="spacingAndGlyphs">Best Bid</text>
<text x="17.2" y="364" style="fill:#f00" textLength="44.2" lengthAdjust="spacingAndGlyphs">Best Ask</text>
<text x="17.2" y="394" style="fill:#ff0" textLength="48.8" lengthAdjust="spacingAndGlyphs">PACF Ask</text>
<text x="17.2" y="424" style="fill:#0ff" textLength="45.4" lengthAdjust="spacingAndGlyphs">PACF Bid</text>
<text x="1207.3" y="335">12</text>
<text x="1207.3" y="379">10</text>
<text x="1207.3" y="423">8</text>
<text x="1207.3" y="468">6</text>
<text x="1207.3" y="512">4</text>
<text x="1207.3" y="556">2</text>
<text x="1207.3" y="601">0</text>
<g clip-path="url(#kbot)">
<text class="s" x="-11" y="609" textLength="58.2" lengthAdjust="spacingAndGlyphs">1000 09:41:21</text>
<text class="s" x="63" y="609" textLength="58.2" lengthAdjust="spacingAndGlyphs">1011 09:41:21</text>
<text class="s" x="137" y="609" textLength="58.2" lengthAdjust="spacingAndGlyphs">1022 09:41:21</text>
<text class="s" x="211" y="609" textLength="58.2" lengthAdjust="spacingAndGlyphs">1033 09:41:21</text>
<text class="s" x="285" y="609" textLength="58.2" lengthAdjust="spacingAndGlyphs">1044 09:41:21</text>
<text class="s" x="359" y="609" textLength="58.2" lengthAdjust="spacingAndGlyphs">1055 09:41:21</text>
<text class="s" x="433" y="609" textLength="58.2" lengthAdjust="spacingAndGlyphs">1066 09:41:21</text>
<text class="s" x="507" y="609" textLength="58.2" lengthAdjust="spacingAndGlyphs">1077 09:41:21</text>
<text class="s" x="581" y="609" textLength="58.2" lengthAdjust="spacingAndGlyphs">1088 09:41:21</text>
<text class="s" x="655" y="609" textLength="58.2" lengthAdjust="spacingAndGlyphs">1099 09:41:21</text>
<text class="s" x="729" y="609" textLength="58.2" lengthAdjust="spacingAndGlyphs">1110 09:41:21</text>
<text class="s" x="803" y="609" textLength="58.2" lengthAdjust="spacingAndGlyphs">1121 09:41:21</text>
<text class="s" x="877" y="609" textLength="58.2" lengthAdjust="spacingAndGlyphs">1132 09:41:21</text>
<text class="s" x="951" y="609" textLength="58.2" lengthAdjust="spacingAndGlyphs">1143 09:41:21</text>
<text class="s" x="1025" y="609" textLength="58.2" lengthAdjust="spacingAndGlyphs">1154 09:41:21</text>
<text class="s" x="1099" y="609" textLength="58.2" lengthAdjust="spacingAndGlyphs">1165 09:41:21</text>
</g>
</g>
</svg></body></html>
